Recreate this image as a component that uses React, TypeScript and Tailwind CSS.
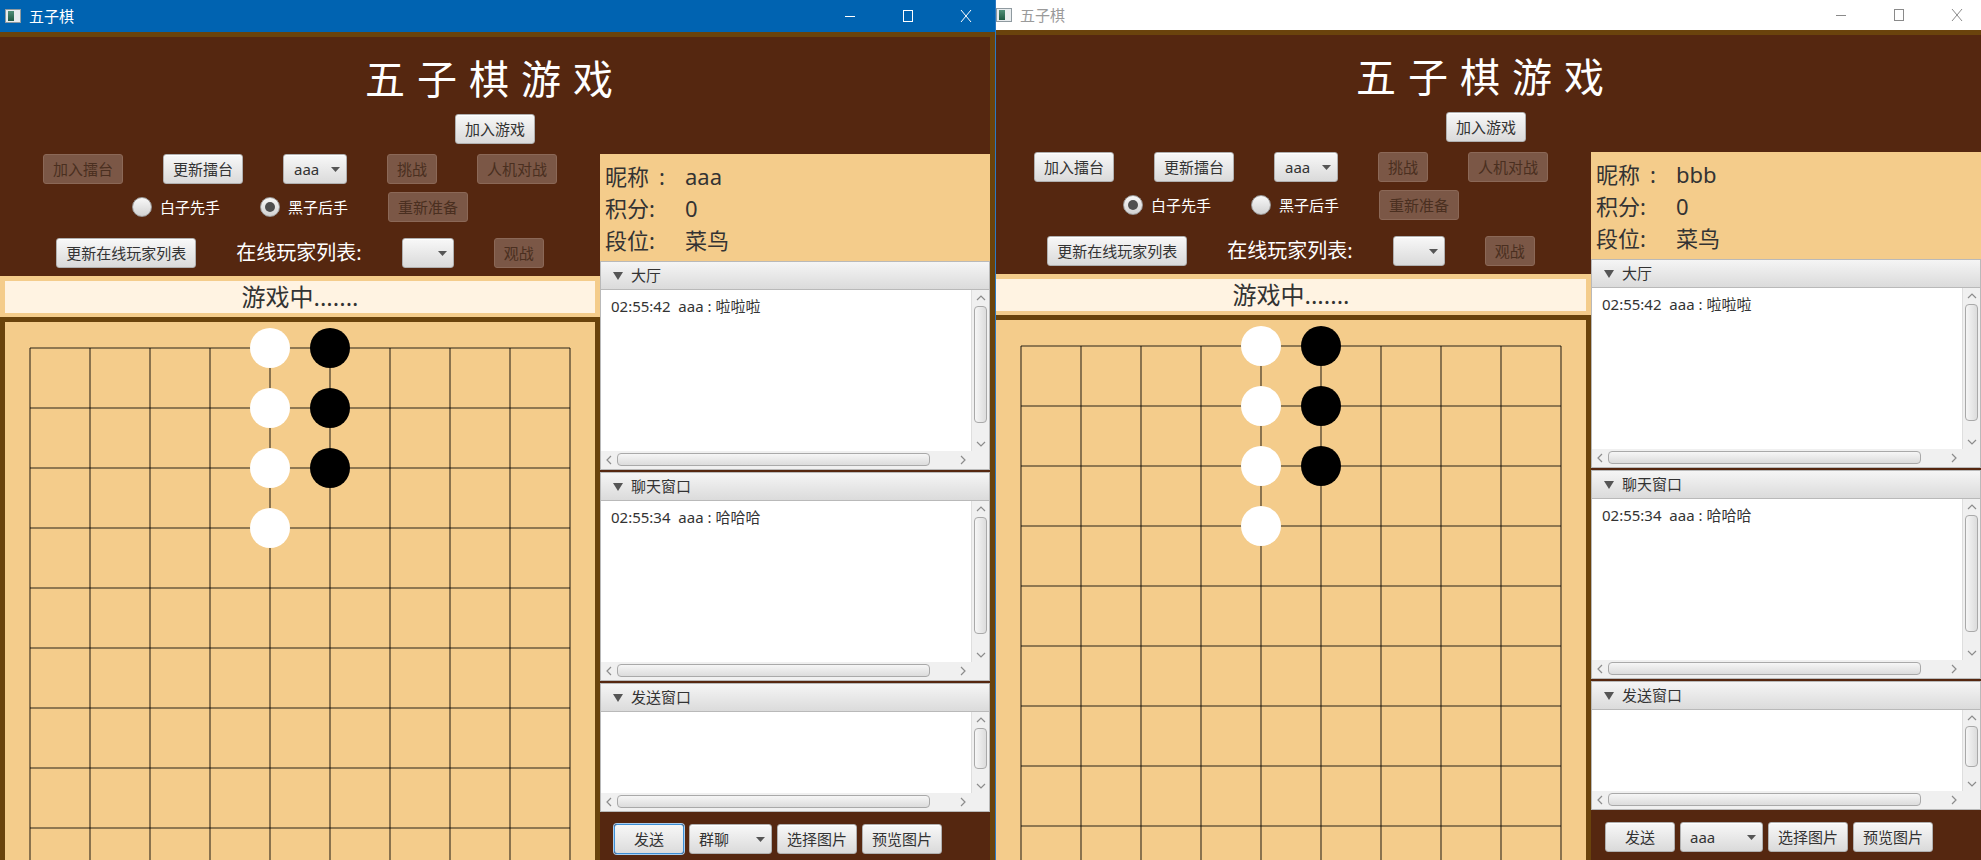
import React from "react";

const FONT = "font-['Noto_Sans','Noto_Sans_CJK_SC',sans-serif]";

type Dir = "up" | "down" | "left" | "right";

function Chevron({ dir }: { dir: Dir }) {
  const vertical = dir === "up" || dir === "down";
  const pts = {
    up: "1,6 5,2 9,6",
    down: "1,2 5,6 9,2",
    left: "6,1 2,5 6,9",
    right: "2,1 6,5 2,9",
  }[dir];
  const w = vertical ? 10 : 8;
  const h = vertical ? 8 : 10;
  return (
    <svg width={w} height={h} viewBox={`0 0 ${w} ${h}`} aria-hidden>
      <polyline points={pts} fill="none" stroke="#8c8c8c" strokeWidth="1.2" />
    </svg>
  );
}

function Btn({
  label,
  w,
  disabled,
  focus,
}: {
  label: string;
  w: string;
  disabled?: boolean;
  focus?: boolean;
}) {
  const skin = disabled
    ? "border-[#8b6857] bg-[#7b5746] text-[#4a2f20]"
    : focus
      ? "border-[#3d8fd6] bg-gradient-to-b from-[#f7f7f7] to-[#dcdcdc] text-[#333] shadow-[0_0_0_1px_#a9cdee]"
      : "border-[#b0b0b0] bg-gradient-to-b from-[#f8f8f8] to-[#dadada] text-[#333] shadow-[inset_0_1px_0_#fff]";
  return (
    <div
      className={`flex h-[30px] shrink-0 items-center justify-center rounded-[3px] border text-[15px] leading-none ${skin} ${w}`}
    >
      {label}
    </div>
  );
}

function Combo({ text, w, pl = "pl-[10px]" }: { text: string; w: string; pl?: string }) {
  return (
    <div
      className={`flex h-[30px] shrink-0 items-center justify-between rounded-[3px] border border-[#b0b0b0] bg-gradient-to-b from-[#f8f8f8] to-[#dadada] pr-[6px] text-[15px] leading-none text-[#333] shadow-[inset_0_1px_0_#fff] ${pl} ${w}`}
    >
      <span>{text}</span>
      <svg width="9" height="5" viewBox="0 0 9 5" aria-hidden>
        <polygon points="0,0 9,0 4.5,5" fill="#555" />
      </svg>
    </div>
  );
}

function Radio({ label, on }: { label: string; on?: boolean }) {
  return (
    <div className="flex items-center gap-[8px]">
      <div className="flex h-[20px] w-[20px] items-center justify-center rounded-full border border-[#9a9a9a] bg-gradient-to-b from-[#f8f8f8] to-[#d2d2d2]">
        {on && <div className="h-[10px] w-[10px] rounded-full bg-[#4f4f4f]" />}
      </div>
      <span className="text-[15px] leading-none text-white">{label}</span>
    </div>
  );
}

function PaneHeader({ title }: { title: string }) {
  return (
    <div className="flex h-[29px] items-center border border-[#b9b9b9] bg-gradient-to-b from-[#f5f5f5] to-[#dbdbdb] pl-[12px] text-[15px] leading-none text-[#333]">
      <svg width="10" height="8" viewBox="0 0 10 8" aria-hidden>
        <polygon points="0,0 10,0 5,8" fill="#555" />
      </svg>
      <span className="ml-[8px]">{title}</span>
    </div>
  );
}

function PaneBody({ text, h, thumb }: { text?: string; h: string; thumb: string }) {
  return (
    <div className={`flex flex-col border-x border-b border-[#b9b9b9] bg-[#f0f0f0] ${h}`}>
      <div className="flex min-h-0 flex-1">
        <div className="flex-1 whitespace-pre bg-white px-[10px] pt-[6px] text-[15px] leading-[20px] text-[#333]">
          {text}
        </div>
        <div className="flex w-[18px] flex-col border-l border-[#dedede] bg-[#f0f0f0]">
          <div className="flex h-[15px] items-center justify-center">
            <Chevron dir="up" />
          </div>
          <div className="flex-1 px-[2px] pt-[1px]">
            <div className={`rounded-[4px] border border-[#a9a9a9] bg-gradient-to-r from-[#f6f6f6] to-[#dcdcdc] ${thumb}`} />
          </div>
          <div className="flex h-[15px] items-center justify-center">
            <Chevron dir="down" />
          </div>
        </div>
      </div>
      <div className="flex h-[18px]">
        <div className="flex w-[16px] items-center justify-center">
          <Chevron dir="left" />
        </div>
        <div className="pt-[2px]">
          <div className="h-[13px] w-[313px] rounded-[4px] border border-[#a9a9a9] bg-gradient-to-b from-[#f6f6f6] to-[#dcdcdc]" />
        </div>
        <div className="flex flex-1 items-center justify-end pr-[4px]">
          <Chevron dir="right" />
        </div>
        <div className="w-[18px] bg-[#f0f0f0]" />
      </div>
    </div>
  );
}

function Board() {
  const xs = Array.from({ length: 10 }, (_, i) => 25 + i * 60);
  const ys = Array.from({ length: 10 }, (_, i) => 26 + i * 60);
  const white = [0, 1, 2, 3];
  const black = [0, 1, 2];
  return (
    <svg width="590" height="560" viewBox="0 0 590 560" aria-hidden>
      {ys.map((y) => (
        <line key={`h${y}`} x1={25} y1={y} x2={565} y2={y} stroke="#000" strokeOpacity="0.55" strokeWidth="1.6" />
      ))}
      {xs.map((x) => (
        <line key={`v${x}`} x1={x} y1={26} x2={x} y2={566} stroke="#000" strokeOpacity="0.55" strokeWidth="1.6" />
      ))}
      {white.map((r) => (
        <circle key={`w${r}`} cx={265} cy={26 + r * 60} r={20} fill="#fff" />
      ))}
      {black.map((r) => (
        <circle key={`b${r}`} cx={325} cy={26 + r * 60} r={20} fill="#000" />
      ))}
    </svg>
  );
}

function TitleBar({ active }: { active: boolean }) {
  const ink = active ? "#ffffff" : "#8a8a8a";
  return (
    <div
      className={`flex shrink-0 items-center ${
        active ? "h-[32px] bg-[#0063b1] text-white" : "h-[30px] bg-white text-[#9a9a9a]"
      }`}
    >
      <div className="ml-[5px] flex h-[14px] w-[16px] border border-[#8f9aa0] bg-[#e8ecee]">
        <div className="ml-[2px] mt-[1px] h-[10px] w-[6px] bg-gradient-to-b from-[#4f8f78] to-[#1f5a44]" />
      </div>
      <span className="ml-[8px] text-[15px] leading-none">五子棋</span>
      <div className="ml-auto flex h-full">
        <div className="flex w-[58px] items-center justify-center">
          <svg width="12" height="12" viewBox="0 0 12 12" aria-hidden>
            <line x1="1" y1="6.5" x2="11" y2="6.5" stroke={ink} strokeWidth="1" />
          </svg>
        </div>
        <div className="flex w-[58px] items-center justify-center">
          <svg width="12" height="14" viewBox="0 0 12 14" aria-hidden>
            <rect x="1.5" y="1.5" width="9" height="11" fill="none" stroke={ink} strokeWidth="1" />
          </svg>
        </div>
        <div className="flex w-[58px] items-center justify-center">
          <svg width="12" height="14" viewBox="0 0 12 14" aria-hidden>
            <path d="M1 1 L11 13 M11 1 L1 13" stroke={ink} strokeWidth="1" fill="none" />
          </svg>
        </div>
      </div>
    </div>
  );
}

type WindowProps = {
  active: boolean;
  nick: string;
  hostOn: boolean;
  whiteFirst: boolean;
  target: string;
};

function GameWindow({ active, nick, hostOn, whiteFirst, target }: WindowProps) {
  return (
    <div className={`flex h-[860px] w-[995px] shrink-0 flex-col ${FONT}`}>
      <TitleBar active={active} />
      <div className="flex min-h-0 flex-1 flex-col border-r-[5px] border-t-[5px] border-[#6a430c] bg-[#552710]">
        {/* heading */}
        <div className="flex h-[117px] shrink-0 flex-col items-center pt-[22px]">
          <h1 className="h-[40px] text-[40px] leading-[40px] tracking-[12px] text-white">五子棋游戏</h1>
          <div className="mt-[15px]">
            <Btn label="加入游戏" w="w-[80px]" />
          </div>
        </div>

        <div className="flex min-h-0 flex-1">
          {/* left: controls + board */}
          <div className="flex w-[600px] shrink-0 flex-col">
            <div className="flex justify-center gap-[40px]">
              <Btn label="加入擂台" w="w-[80px]" disabled={!hostOn} />
              <Btn label="更新擂台" w="w-[80px]" />
              <Combo text="aaa" w="w-[64px]" />
              <Btn label="挑战" w="w-[50px]" disabled />
              <Btn label="人机对战" w="w-[80px]" disabled />
            </div>
            <div className="mt-[8px] flex h-[30px] items-center justify-center gap-[40px]">
              <Radio label="白子先手" on={whiteFirst} />
              <Radio label="黑子后手" on={!whiteFirst} />
              <Btn label="重新准备" w="w-[80px]" disabled />
            </div>
            <div className="mt-[16px] flex items-center justify-center gap-[40px]">
              <Btn label="更新在线玩家列表" w="w-[140px]" />
              <span className="text-[20px] leading-none text-white">在线玩家列表:</span>
              <Combo text="" w="w-[52px]" />
              <Btn label="观战" w="w-[50px]" disabled />
            </div>
            <div className="mt-[8px] bg-[#f4cc8b] px-[5px] pb-[4px] pt-[5px]">
              <div className="flex h-[32px] items-center justify-center bg-[#fff3e2] text-[24px] leading-none text-[#333]">
                游戏中.......
              </div>
            </div>
            <div className="min-h-0 flex-1 overflow-hidden border-x-[5px] border-t-[5px] border-[#6a430c] bg-[#f4cc8b]">
              <Board />
            </div>
          </div>

          {/* right: player info + chat */}
          <div className="flex w-[390px] shrink-0 flex-col">
            <div className="h-[107px] bg-[#f4cc8b] pl-[5px] pt-[6px] text-[22px] leading-[32px] text-[#333]">
              <div className="flex">
                <span className="w-[80px]">
                  昵称<span className="ml-[10px]">:</span>
                </span>
                <span>{nick}</span>
              </div>
              <div className="flex">
                <span className="w-[80px]">积分:</span>
                <span>0</span>
              </div>
              <div className="flex">
                <span className="w-[80px]">段位:</span>
                <span>菜鸟</span>
              </div>
            </div>
            <PaneHeader title="大厅" />
            <PaneBody text="02:55:42  aaa : 啦啦啦" h="h-[180px]" thumb="h-[117px]" />
            <div className="mt-[2px]">
              <PaneHeader title="聊天窗口" />
            </div>
            <PaneBody text="02:55:34  aaa : 哈哈哈" h="h-[180px]" thumb="h-[117px]" />
            <div className="mt-[2px]">
              <PaneHeader title="发送窗口" />
            </div>
            <PaneBody h="h-[100px]" thumb="h-[41px]" />
            <div className="flex gap-[5px] pl-[14px] pt-[12px]">
              <Btn label="发送" w="w-[70px]" focus={active} />
              <Combo text={target} w="w-[83px]" pl="pl-[9px]" />
              <Btn label="选择图片" w="w-[80px]" />
              <Btn label="预览图片" w="w-[80px]" />
            </div>
          </div>
        </div>
      </div>
    </div>
  );
}

export default function App() {
  return (
    <div className="flex h-[860px] w-[1981px] overflow-hidden bg-white">
      <GameWindow active nick="aaa" hostOn={false} whiteFirst={false} target="群聊" />
      <div className="h-[860px] w-[986px] shrink-0 overflow-hidden border-l border-[#2b79c2]">
        <div className="-ml-[5px]">
          <GameWindow active={false} nick="bbb" hostOn whiteFirst target="aaa" />
        </div>
      </div>
    </div>
  );
}
